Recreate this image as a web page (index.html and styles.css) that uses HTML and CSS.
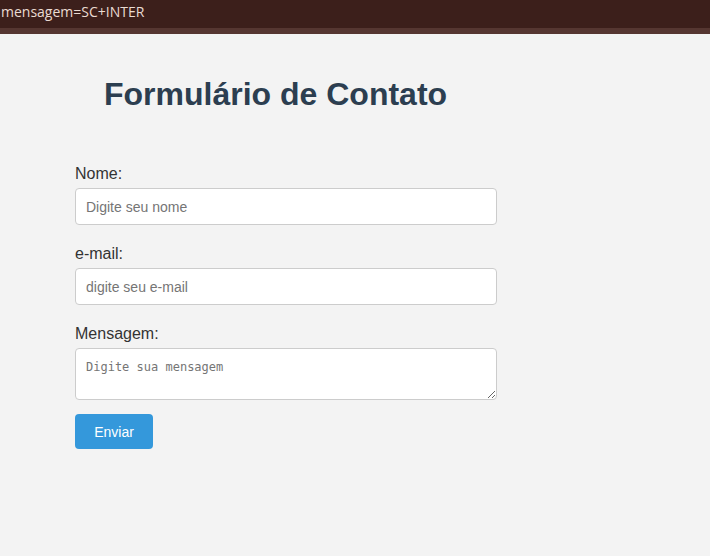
FILE: index.html
```html
<!DOCTYPE html>
<html lang="pt">
<head>
<meta charset="utf-8">
<title>Formulário de Contato</title>
<link rel="stylesheet" href="styles.css">
</head>
<body>
<div class="topbar">mensagem=SC+INTER</div>
<div class="topband"></div>
<main class="page">
  <h1 class="title">Formulário de Contato</h1>
  <form class="form">
    <label class="label" for="nome">Nome:</label>
    <input class="field" id="nome" type="text" placeholder="Digite seu nome">
    <label class="label" for="email">e-mail:</label>
    <input class="field" id="email" type="email" placeholder="digite seu e-mail">
    <label class="label" for="msg">Mensagem:</label>
    <textarea class="field area" id="msg" placeholder="Digite sua mensagem"></textarea>
    <button class="btn" type="button">Enviar</button>
  </form>
</main>
</body>
</html>
```
FILE: styles.css
```css
html, body { margin: 0; padding: 0; }
body {
  background: #f3f3f3;
  font-family: "Liberation Sans", Arial, sans-serif;
  color: #333;
  height: 556px;
  overflow: hidden;
}
.topbar {
  height: 28px;
  background: #3c1f1b;
  color: #eadbd2;
  font-family: "Open Sans", "Noto Sans", sans-serif;
  font-size: 14px;
  line-height: 24px;
  padding-left: 1px;
  box-sizing: border-box;
}
.topband { height: 6px; background: #553631; }
.page { padding: 0 0 0 75px; }
.title {
  margin: 42px 0 0 29px;
  font-size: 32px;
  line-height: 37px;
  font-weight: bold;
  color: #2c3e50;
}
.form {
  display: flex;
  flex-direction: column;
  align-items: flex-start;
  width: 422px;
  margin-top: 52px;
}
.label {
  font-size: 16px;
  line-height: 18px;
  margin-bottom: 5px;
  color: #333;
}
.field {
  box-sizing: border-box;
  width: 422px;
  height: 37px;
  padding: 10px;
  border: 1px solid #ccc;
  border-radius: 4px;
  background: #fff;
  font-family: "Liberation Sans", Arial, sans-serif;
  font-size: 14px;
  color: #333;
  margin-bottom: 20px;
}
.field::placeholder { color: #757575; }
.area {
  height: 52px;
  font-family: "DejaVu Sans Mono", monospace;
  font-size: 12px;
  padding: 11px 10px 10px;
  margin-bottom: 14px;
  resize: vertical;
}
.btn {
  width: 78px;
  height: 35px;
  border: none;
  border-radius: 4px;
  background: #3498db;
  color: #fff;
  font-family: "Liberation Sans", Arial, sans-serif;
  font-size: 14px;
}
```
